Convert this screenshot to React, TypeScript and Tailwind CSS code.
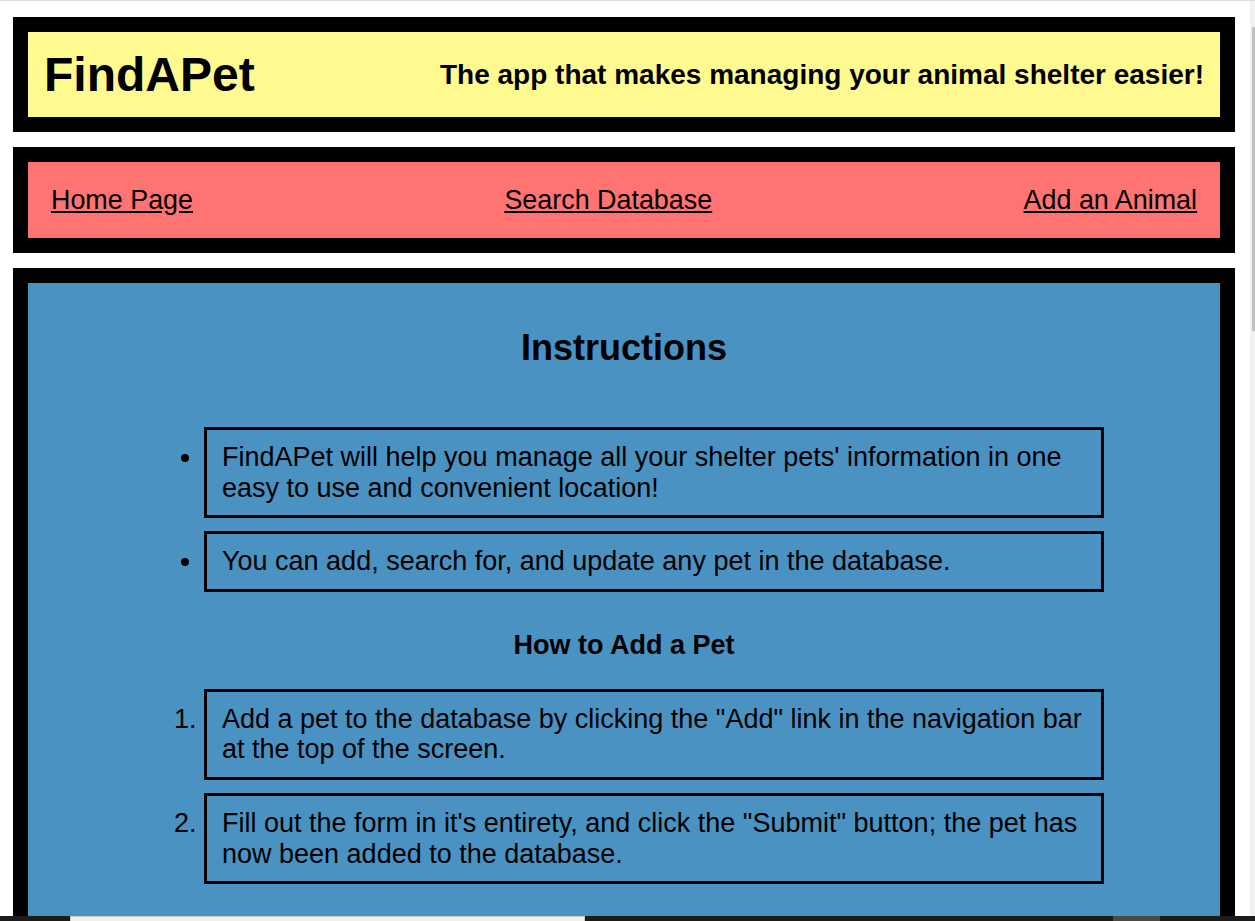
const App = () => {
  return (
    <div className="h-[921px] overflow-hidden flex flex-col bg-white text-black font-['Liberation_Sans',Arial,sans-serif]">
      <div className="h-px bg-[#dadada]" />

      <div className="flex-1 flex min-h-0">
        <div className="flex-1 min-w-0 overflow-hidden pl-[13px] pr-[15px] pt-[16px]">
          {/* header */}
          <header className="h-[115px] border-[15px] border-black bg-[#fffa8f] flex items-center justify-between px-4">
            <h1 className="text-[48px] font-bold leading-[55px]">FindAPet</h1>
            <p className="text-[28px] font-bold leading-[32px]">The app that makes managing your animal shelter easier!</p>
          </header>

          {/* nav */}
          <nav className="mt-[15px] h-[106px] border-[15px] border-black bg-[#ff7373] flex items-center justify-between px-[23px] text-[26.9px] leading-[31px]">
            <a href="#" className="underline">Home Page</a>
            <a href="#" className="underline">Search Database</a>
            <a href="#" className="underline">Add an Animal</a>
          </nav>

          {/* main */}
          <main className="mt-[15px] border-[15px] border-b-0 border-black bg-[#4a92c2] pt-[44px] pb-10">
            <h2 className="text-[36px] font-bold leading-[41px] text-center">Instructions</h2>

            <ul className="mt-[59px] list-disc list-outside pl-[176px] text-[27px] leading-[30.67px] space-y-[13px]">
              <li className="w-[900px] border-[3px] border-black px-[15px] py-[12px]">
                FindAPet will help you manage all your shelter pets' information in one easy to use and convenient location!
              </li>
              <li className="w-[900px] border-[3px] border-black px-[15px] py-[12px]">
                You can add, search for, and update any pet in the database.
              </li>
            </ul>

            <h3 className="mt-[38px] text-[27px] font-bold leading-[30.67px] text-center">How to Add a Pet</h3>

            <ol className="mt-[28px] list-decimal list-outside pl-[176px] text-[27px] leading-[30.67px] space-y-[13px]">
              <li className="w-[900px] border-[3px] border-black px-[15px] py-[12px]">
                Add a pet to the database by clicking the "Add" link in the navigation bar at the top of the screen.
              </li>
              <li className="w-[900px] border-[3px] border-black px-[15px] py-[12px]">
                Fill out the form in it's entirety, and click the "Submit" button; the pet has now been added to the database.
              </li>
            </ol>
          </main>
        </div>

        {/* scrollbar */}
        <div className="w-[5px] bg-[#f1f1f1] pl-[2px] pt-[26px]">
          <div className="w-[3px] h-[304px] bg-[#c1c1c1]" />
        </div>
      </div>

      {/* taskbar strip */}
      <div className="h-[5px] bg-[#1c1c1c] flex">
        <div className="w-[70px]" />
        <div className="w-[515px] bg-[#f0f0f0] border-t border-x border-[#c8c8c8]" />
        <div className="flex-1" />
        <div className="w-[47px] bg-[#4a4a4a]" />
        <div className="w-[95px]" />
      </div>
    </div>
  )
}

export default App
